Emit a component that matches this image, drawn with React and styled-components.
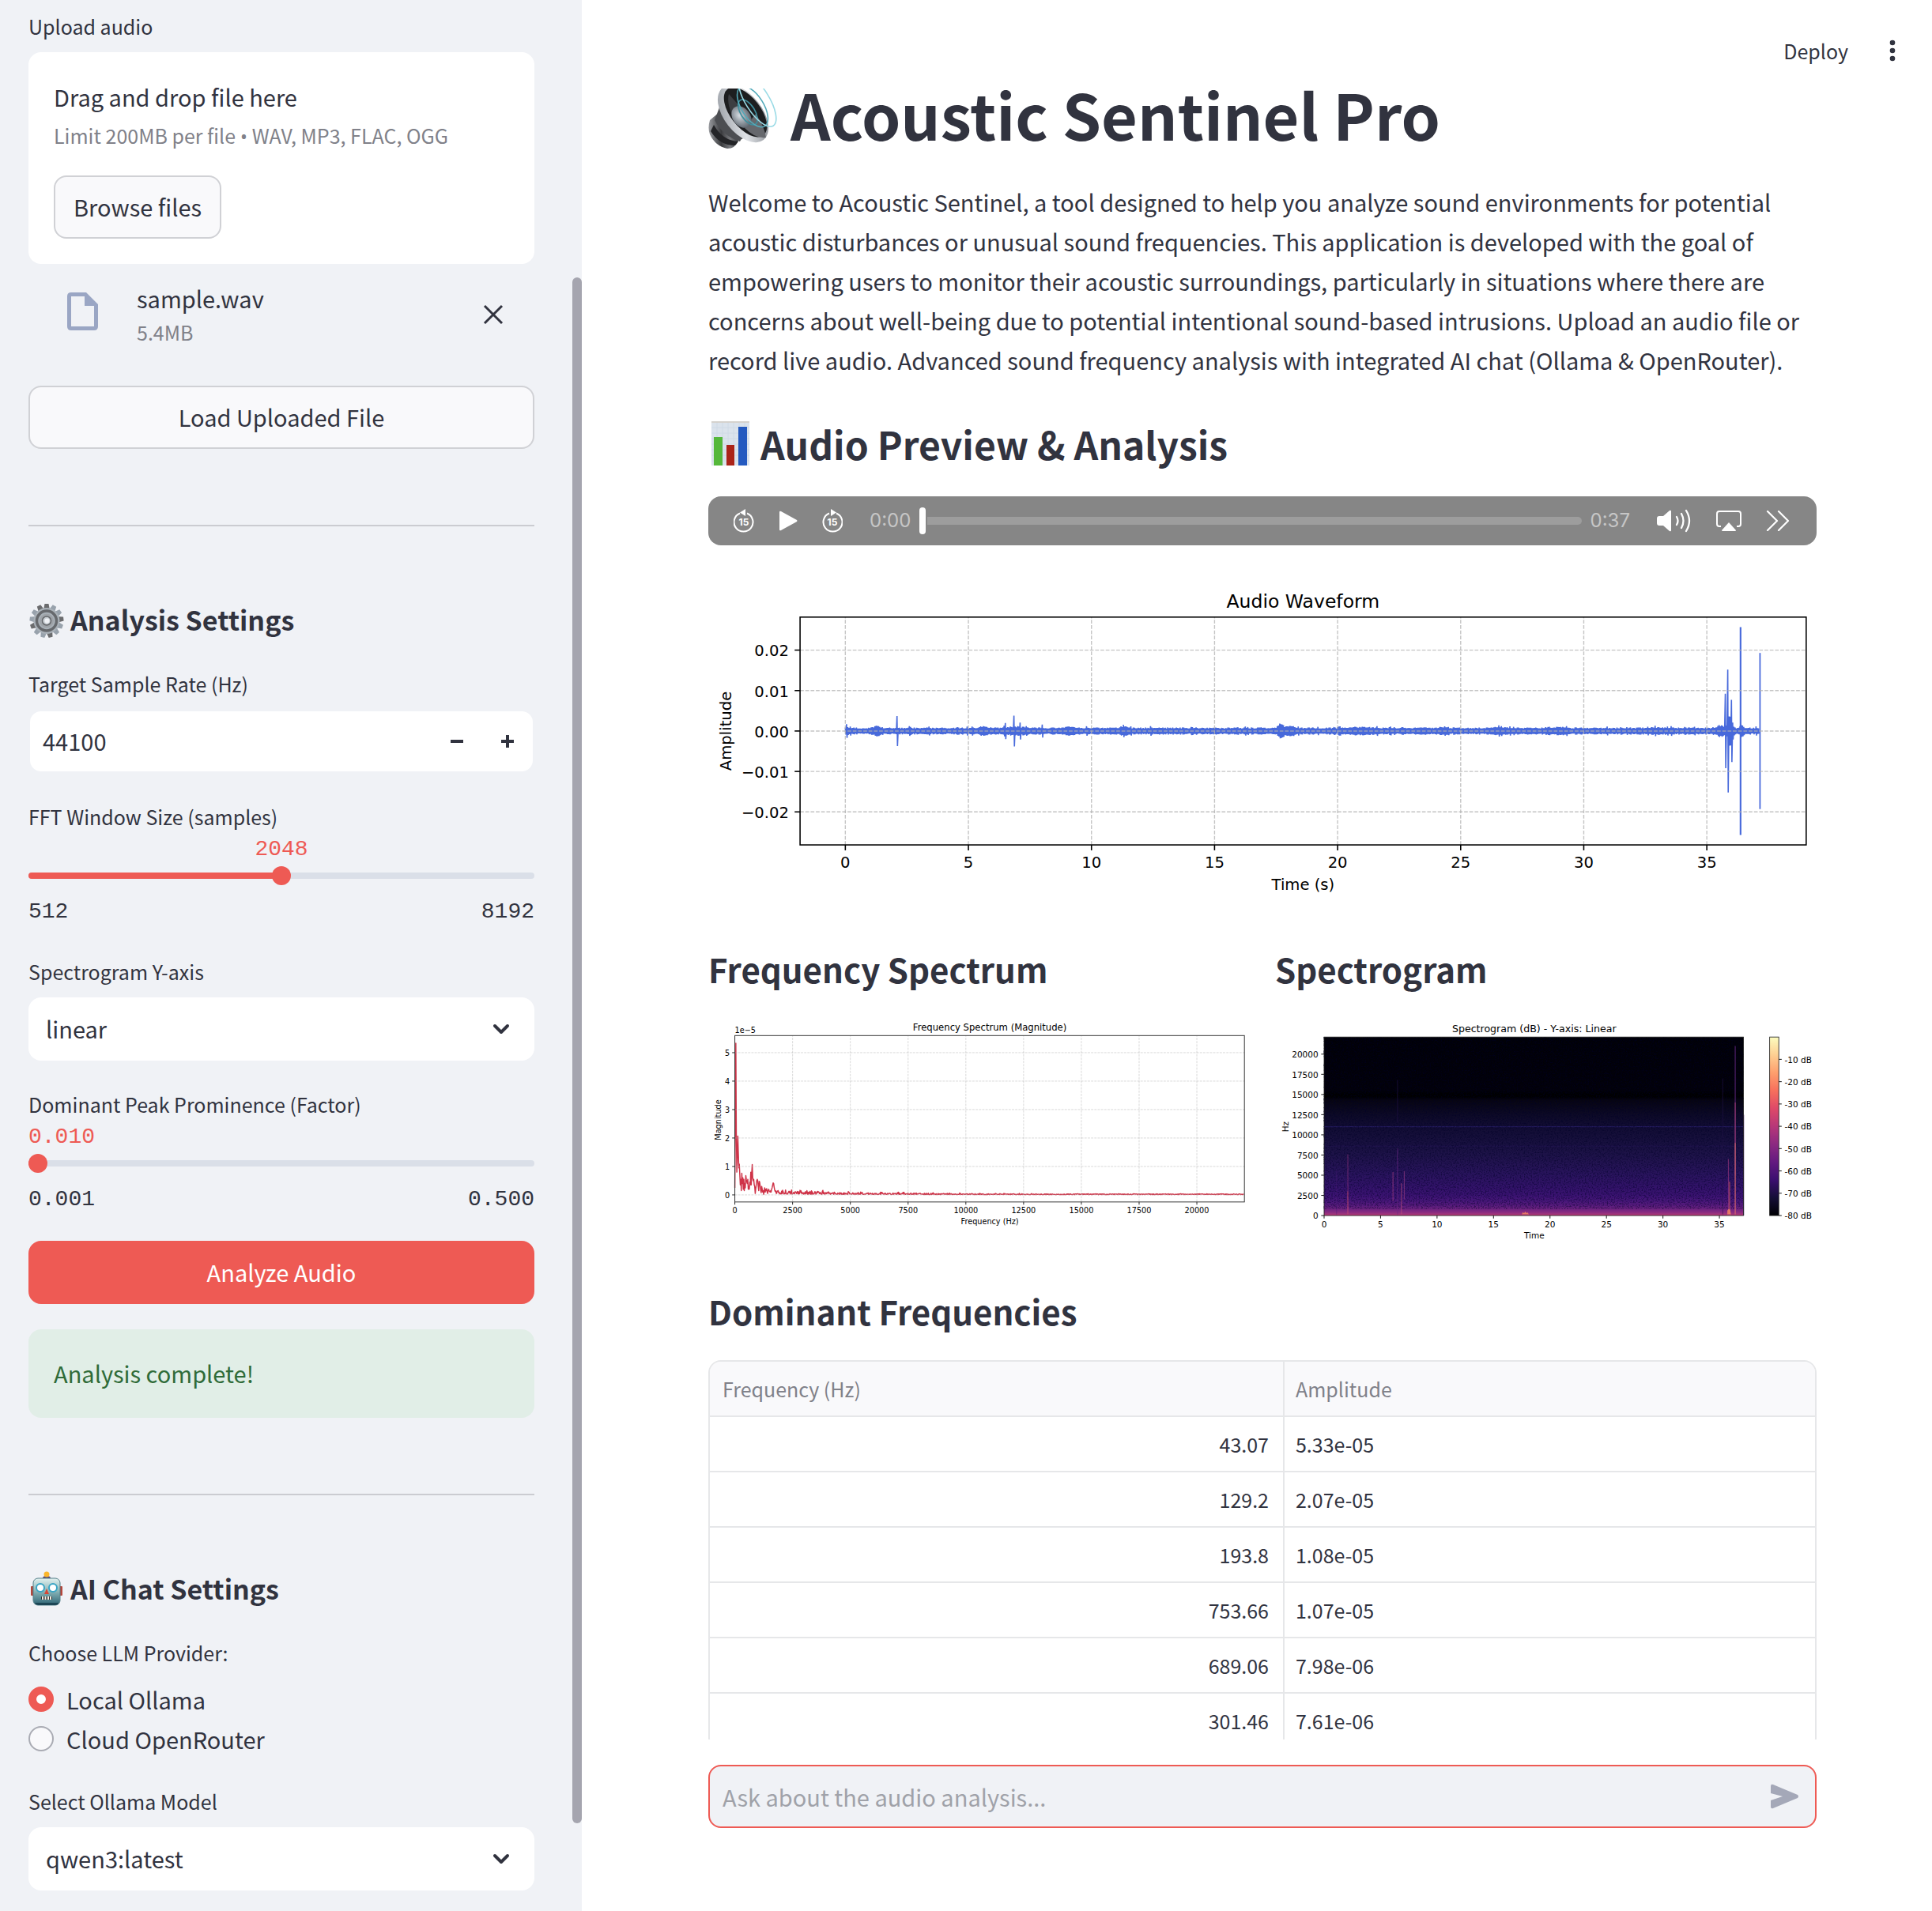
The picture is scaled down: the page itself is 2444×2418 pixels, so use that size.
import React, { useState } from "react";
import styled, { createGlobalStyle } from "styled-components";

const color = {
  ink: "#31333f",
  muted: "#808189",
  accent: "#ee5a54",
  side: "#f0f2f6",
  panel: "#f9f9fb",
  line: "#e6e7e9",
};
const sans = `"Noto Sans CJK SC", "Noto Sans", sans-serif`;
const mono = `"Liberation Mono", monospace`;

const Global = createGlobalStyle`
  *, *::before, *::after { box-sizing: border-box; }
  body { margin: 0; background: #fff; color: ${color.ink}; font: 400 29px/50px ${sans}; }
  button, input, select { font: inherit; color: inherit; margin: 0; }
  button { cursor: pointer; }
  h1, h2, h3, p { margin: 0; }
  svg { display: block; flex: none; }
`;

/* ---------- layout ---------- */

const Page = styled.div`
  display: grid;
  grid-template-columns: 736px minmax(0, 1fr);
  height: 100vh;
  overflow: hidden;
`;

const Sidebar = styled.aside`
  position: relative;
  display: flex;
  flex-direction: column;
  gap: 32px;
  min-height: 0;
  padding: 12px 60px 26px 36px;
  background: ${color.side};
  overflow: hidden;
  & > * { flex: none; }
`;

const ScrollThumb = styled.div`
  position: absolute;
  right: 0;
  top: 14.5%;
  width: 12px;
  height: 80.9%;
  border-radius: 6px;
  background: #a5a5af;
`;

const Main = styled.main`
  display: flex;
  flex-direction: column;
  min-width: 0;
  min-height: 0;
`;

const TopBar = styled.header`
  flex: none;
  display: flex;
  justify-content: flex-end;
  align-items: center;
  gap: 30px;
  height: 84px;
  padding: 43px 36px 0 0;
`;

const PlainButton = styled.button`
  display: flex;
  align-items: center;
  padding: 0;
  border: 0;
  background: none;
  font-size: 25px;
  line-height: 42px;
`;

const Content = styled.div`
  flex: 1;
  min-height: 0;
  display: flex;
  flex-direction: column;
  gap: 32px;
  padding: 16px 146px 0 160px;
  overflow: hidden;
  & > * { flex: none; }
`;

const Columns = styled.div`
  display: grid;
  grid-template-columns: repeat(2, minmax(0, 1fr));
  gap: 32px;
`;

const Column = styled.section`
  display: flex;
  flex-direction: column;
  gap: 32px;
`;

/* ---------- headings and text ---------- */

const PageTitle = styled.h1`
  display: flex;
  gap: 14px;
  padding-bottom: 10px;
  font-size: 79px;
  line-height: 88px;
  font-weight: 700;
`;

const SectionTitle = styled.h2`
  display: flex;
  align-items: center;
  gap: 10px;
  padding: 16px 0 2px;
  font-size: 48px;
  line-height: 66px;
  font-weight: 600;
`;

const SubTitle = styled.h3`
  padding: 13px 0 2px;
  font-size: 42px;
  line-height: 56px;
  font-weight: 600;
`;

const SideTitle = styled.h2`
  display: flex;
  align-items: center;
  gap: 7px;
  font-size: 34px;
  line-height: 52px;
  font-weight: 600;
`;

const Figure = styled.svg`
  width: 100%;
  height: auto;
  font-family: "DejaVu Sans", sans-serif;
  font-size: 10px;
`;

/* ---------- form parts ---------- */

const Group = styled.div`
  display: flex;
  flex-direction: column;
  gap: 34px;
`;

const Field = styled.div`
  display: flex;
  flex-direction: column;
`;

const Label = styled.label`
  font-size: 25px;
  line-height: 42px;
  margin-bottom: ${(p) => (p.$tight ? 0 : 12)}px;
`;

const DropZone = styled.div`
  display: flex;
  flex-direction: column;
  align-items: flex-start;
  padding: 32px;
  border-radius: 16px;
  background: #fff;
  line-height: 48px;
`;

const Caption = styled.span`
  font-size: 25px;
  line-height: ${(p) => p.$line || 50}px;
  color: ${color.muted};
`;

const Bullet = styled.span`
  font-family: "Open Sans", sans-serif;
  line-height: 0;
`;

const Button = styled.button`
  height: 80px;
  padding: 0 23px 3px;
  border: 2px solid ${(p) => (p.$primary ? color.accent : "#d0d1d5")};
  border-radius: 16px;
  background: ${(p) => (p.$primary ? color.accent : color.panel)};
  color: ${(p) => (p.$primary ? "#fff" : color.ink)};
  ${DropZone} > & { margin-top: 26px; }
`;

const FileRow = styled.div`
  display: flex;
  align-items: center;
  padding: 21px 39px 15px 48px;
`;

const FileText = styled.div`
  flex: 1;
  display: flex;
  flex-direction: column;
  padding-left: 47px;
  line-height: 44px;
`;

const Rule = styled.hr`
  width: 100%;
  height: 2px;
  margin: 64px 0 60px;
  border: 0;
  background: #cbccd1;
`;

const NumberBox = styled.div`
  display: flex;
  align-items: center;
  height: 80px;
  border: 2px solid ${color.side};
  border-radius: 16px;
  background: #fff;
`;

const NumberInput = styled.input`
  flex: 1;
  min-width: 0;
  padding: 0 16px 2px;
  border: 0;
  outline: 0;
  background: none;
`;

const StepButton = styled.button`
  display: grid;
  place-items: center;
  width: 64px;
  height: 76px;
  padding: 0;
  border: 0;
  background: none;
`;

const SelectWrap = styled.div`
  display: grid;
  align-items: center;
  & > * { grid-area: 1 / 1; }
  & > svg { justify-self: end; margin-right: 31px; pointer-events: none; }
`;

const Select = styled.select`
  appearance: none;
  width: 100%;
  height: 80px;
  padding: 0 64px 2px 22px;
  border: 0;
  border-radius: 16px;
  background: #fff;
`;

const SliderValue = styled.output`
  position: relative;
  display: block;
  width: max-content;
  font: 400 28px/42px ${mono};
  color: ${color.accent};
`;

const SliderBox = styled.div`
  position: relative;
  display: flex;
  align-items: center;
  height: 24px;
`;

const SliderTrack = styled.div`
  width: 100%;
  height: 8px;
  border-radius: 4px;
  background: #dadfe8;
  overflow: hidden;
`;

const SliderFill = styled.div`
  height: 100%;
  background: ${color.accent};
`;

const SliderThumb = styled.div`
  position: absolute;
  width: 24px;
  height: 24px;
  border-radius: 50%;
  background: ${color.accent};
`;

const SliderInput = styled.input`
  position: absolute;
  inset: 0;
  width: 100%;
  opacity: 0;
  cursor: pointer;
`;

const SliderEnds = styled.div`
  display: flex;
  justify-content: space-between;
  padding-top: 14px;
  font: 400 28px/40px ${mono};
`;

const Alert = styled.div`
  padding: 30px 32px 32px;
  border-radius: 16px;
  background: #e1eee7;
  color: #2f6b38;
`;

const RadioGroup = styled.fieldset`
  display: flex;
  flex-direction: column;
  gap: 2px;
  margin: 0;
  padding: 0;
  border: 0;
`;

const Legend = styled.legend`
  padding: 0;
  margin-bottom: 14px;
  font-size: 25px;
  line-height: 42px;
`;

const RadioLabel = styled.label`
  display: flex;
  align-items: center;
  gap: 16px;
  line-height: 48px;
`;

const Radio = styled.input`
  appearance: none;
  width: 32px;
  height: 32px;
  border: 2px solid #a9abb3;
  border-radius: 50%;
  background: ${color.panel};
  &:checked { border: 10px solid ${color.accent}; background: #fff; }
`;

/* ---------- audio player ---------- */

const Player = styled.div`
  display: flex;
  align-items: center;
  gap: 31px;
  height: 62px;
  padding: 0 34px 0 32px;
  border-radius: 16px;
  background: #868686;
  color: #fff;
`;

const Timeline = styled.div`
  flex: 1;
  display: flex;
  align-items: center;
  gap: 11px;
  padding: 0 3px;
  font: 400 24px/30px Inter, sans-serif;
  color: #c6c6c6;
`;

const Seek = styled.input`
  flex: 1;
  min-width: 0;
  appearance: none;
  height: 34px;
  background: none;
  &::-webkit-slider-runnable-track {
    height: 10px;
    border-radius: 5px;
    background: #9d9d9d;
  }
  &::-webkit-slider-thumb {
    appearance: none;
    width: 8px;
    height: 34px;
    margin-top: -12px;
    border-radius: 4px;
    background: #fff;
    box-shadow: 0 0 0 2px #868686;
  }
`;

/* ---------- data table ---------- */

const TableFrame = styled.div`
  border: 2px solid ${color.line};
  border-radius: 16px;
  overflow: hidden;
`;

const Table = styled.table`
  width: 100%;
  border-collapse: separate;
  border-spacing: 0;
  table-layout: fixed;
  font-size: 25px;
  line-height: 34px;
`;

const Cell = styled.td`
  height: 70px;
  padding: 0 18px 0 14px;
  border-bottom: 2px solid ${color.line};
  border-right: ${(p) => (p.$first ? 2 : 0)}px solid ${color.line};
  text-align: ${(p) => (p.$first ? "right" : "left")};
`;

const HeadCell = styled.th`
  width: ${(p) => (p.$first ? "52%" : "48%")};
  height: 70px;
  padding: 0 14px 0 ${(p) => (p.$first ? 16 : 14)}px;
  border-bottom: 2px solid ${color.line};
  border-right: ${(p) => (p.$first ? 2 : 0)}px solid ${color.line};
  background: ${color.panel};
  color: ${color.muted};
  font-weight: 400;
  text-align: left;
`;

/* ---------- chat bar ---------- */

const ChatBar = styled.form`
  flex: none;
  padding: 32px 146px 105px 160px;
`;

const ChatBox = styled.div`
  display: flex;
  align-items: center;
  height: 80px;
  padding: 0 20px 0 16px;
  border: 2px solid ${color.accent};
  border-radius: 16px;
  background: ${color.side};
`;

const ChatInput = styled.input`
  flex: 1;
  min-width: 0;
  padding: 0;
  border: 0;
  outline: 0;
  background: none;
  &::placeholder { color: #a0a2a9; opacity: 1; }
`;

/* ---------- drawings ---------- */

const Speaker = () => (
  <svg width="90" height="88" viewBox="0 0 90 88" aria-hidden="true">
    <defs>
      <linearGradient id="spRim" x1="0" y1="0" x2="1" y2="1">
        <stop offset="0" stopColor="#8b9098" />
        <stop offset=".5" stopColor="#dfe2e6" />
        <stop offset="1" stopColor="#6d7178" />
      </linearGradient>
      <linearGradient id="spBody" x1="0" y1="0" x2="1" y2="0">
        <stop offset="0" stopColor="#9a9ca0" />
        <stop offset=".35" stopColor="#3a3b3e" />
        <stop offset=".6" stopColor="#77797d" />
        <stop offset="1" stopColor="#17181a" />
      </linearGradient>
      <radialGradient id="spDome" cx=".45" cy=".4" r=".6">
        <stop offset="0" stopColor="#d5dce2" />
        <stop offset="1" stopColor="#5c646d" />
      </radialGradient>
      <clipPath id="spClip"><rect y="12" width="90" height="76" /></clipPath>
    </defs>
    <g clipPath="url(#spClip)">
      <path d="M2 52 Q-1 62 2 70 Q9 85 24 88 Q34 88 38 78 L46 74 L14 42 Z" fill="url(#spBody)" />
      <path d="M3 66 Q14 84 34 84 L38 79 Q18 78 7 58 Z" fill="#232427" />
      <path d="M8 52 L14 36 L44 72 L40 79 Q18 72 8 52 Z" fill="#4c4e52" />
      <ellipse cx="44" cy="44" rx="24" ry="42" transform="rotate(-38 44 44)" fill="url(#spRim)" />
      <ellipse cx="47" cy="42" rx="19" ry="37" transform="rotate(-38 47 42)" fill="#1d1e20" />
      <path d="M26 19 Q22 32 36 58 L48 44 Z" fill="#3c3e42" />
      <path d="M46 62 Q60 76 73 74 Q71 60 60 44 Z" fill="#66686d" />
      <ellipse cx="42" cy="48" rx="11" ry="15" transform="rotate(-38 42 48)" fill="url(#spDome)" />
      <g fill="none" strokeWidth="1.6">
        <ellipse cx="50" cy="42" rx="9" ry="18" transform="rotate(-32 50 42)" stroke="#3f8f9e" />
        <ellipse cx="56" cy="35" rx="14" ry="29" transform="rotate(-32 56 35)" stroke="#53aaba" />
        <ellipse cx="62" cy="27" rx="15" ry="38" transform="rotate(-32 62 27)" stroke="#9adbe6" />
      </g>
    </g>
  </svg>
);

const BarChart = () => (
  <svg width="56" height="56" viewBox="0 0 56 56" aria-hidden="true">
    <rect x="4" width="48" height="56" fill="#dbe3ec" />
    <path d="M4 1H52M4 8H52M4 15H52M4 22H52M4 29H52M4 36H52M4 43H52M4 50H52M11 0V56M18 0V56M25 0V56M32 0V56M39 0V56M46 0V56" stroke="#cfdae6" />
    <rect x="4" width="48" height="2" fill="#d5d2ce" />
    <rect x="7" y="20" width="11" height="36" fill="#55b83b" />
    <rect x="23" y="30" width="10" height="26" fill="#ab2419" />
    <rect x="38" y="7" width="11" height="49" fill="#245ac0" />
  </svg>
);

const Gear = () => (
  <svg width="46" height="46" viewBox="0 0 46 46" aria-hidden="true">
    {Array.from({ length: 13 }, (_, i) => (
      <path key={i} d="M20.500 3 L25.500 3 L27 11 L19 11 Z" fill={i % 3 ? "#98a2ac" : "#6b6c6e"} transform={`rotate(${i * 27.7} 23 24.500)`} />
    ))}
    <circle cx="23" cy="24.500" r="16.500" fill="#a9b1b8" />
    <circle cx="23" cy="24.500" r="12.500" fill="none" stroke="#66696d" strokeWidth="3.500" />
    <circle cx="23" cy="24.500" r="9" fill="#9ea3a8" />
    <circle cx="23" cy="24.500" r="5.500" fill="#c9cfd4" stroke="#63666a" strokeWidth="1.500" />
    <circle cx="23.500" cy="24.500" r="3" fill="#f0f2f6" />
  </svg>
);

const Robot = () => (
  <svg width="46" height="46" viewBox="0 0 46 46" aria-hidden="true">
    <defs>
      <linearGradient id="rbFace" x1="0" y1="0" x2="0" y2="1">
        <stop offset="0" stopColor="#e3f1f0" />
        <stop offset=".45" stopColor="#8fb9bb" />
        <stop offset="1" stopColor="#2b6374" />
      </linearGradient>
    </defs>
    <path d="M18 10 Q18 7 23 7 Q28 7 28 10 Z" fill="#5b4470" />
    <circle cx="23" cy="5" r="3.500" fill="#fbb62c" />
    <rect x="3" y="20" width="4" height="12" rx="1" fill="#b4473c" />
    <rect x="39" y="20" width="4" height="12" rx="1" fill="#b4473c" />
    <rect x="6" y="10" width="34" height="34" rx="6" fill="url(#rbFace)" stroke="#55818a" />
    <path d="M8 41 Q9 44 14 44 H33 Q38 44 38 41 Z" fill="#1d4655" />
    <circle cx="15" cy="22" r="5" fill="#fff" stroke="#38a4c4" strokeWidth="2" />
    <circle cx="31" cy="22" r="5" fill="#fff" stroke="#38a4c4" strokeWidth="2" />
    <path d="M23 23 L26 30 H20 Z" fill="#d64736" />
    <rect x="16" y="33" width="14" height="4" rx="1" fill="#2b2b2e" />
    <path d="M18 33V37M21.500 33V37M25 33V37M28 33V37" stroke="#f2ecdf" strokeWidth="2" />
  </svg>
);

const FileIcon = () => (
  <svg width="42" height="56" viewBox="0 0 42 56" fill="#9aa6c4" aria-hidden="true">
    <path d="M6 0H25L40 15V43Q40 48 35 48H6Q1 48 1 43V5Q1 0 6 0ZM6 5V43H35V17H23V5Z" fillRule="evenodd" />
  </svg>
);

const CloseIcon = () => (
  <svg width="26" height="26" viewBox="0 0 26 26" stroke={color.ink} strokeWidth="3" fill="none">
    <path d="M2 2L24 24M24 2L2 24" />
  </svg>
);

const Chevron = () => (
  <svg width="22" height="14" viewBox="0 0 22 14" fill="none" stroke={color.ink} strokeWidth="4" strokeLinecap="round" strokeLinejoin="round">
    <path d="M3 3L11 11L19 3" />
  </svg>
);

const Dots = () => (
  <svg width="40" height="32" viewBox="0 0 40 32" fill={color.ink}>
    <circle cx="26" cy="6" r="3.300" />
    <circle cx="26" cy="16" r="3.300" />
    <circle cx="26" cy="26" r="3.300" />
  </svg>
);

const Skip = ({ forward }) => (
  <svg width="26" height="32" viewBox="0 0 26 32" fill="none" stroke="#fff" strokeWidth="2">
    <g transform={forward ? undefined : "matrix(-1 0 0 1 26 0)"}>
      <path d="M9 6.500A12 12 0 1 0 18 6.500" />
      <path d="M11 1L18 5.500L11 10Z" fill="#fff" stroke="none" />
    </g>
    <text x="13" y="22" textAnchor="middle" fill="#fff" stroke="none" fontFamily="Inter, sans-serif" fontSize="12" fontWeight="700">15</text>
  </svg>
);

const Play = () => (
  <svg width="24" height="26" viewBox="0 0 24 26"><path d="M1 2Q1 0 3 1L23 12Q24 13 23 14L3 25Q1 26 1 24Z" fill="#fff" /></svg>
);

const Volume = () => (
  <svg width="44" height="32" viewBox="0 0 44 32" fill="none" stroke="#fff" strokeWidth="2.300" strokeLinecap="round">
    <path d="M3 10H8L16 3Q18 2 18 4V28Q18 30 16 29L8 22H3Q0 22 0 19V13Q0 10 3 10Z" fill="#fff" stroke="none" />
    <path d="M25 11Q28 16 25 21M31 7Q36 16 31 25M37 3Q45 16 37 29" />
  </svg>
);

const AirPlay = () => (
  <svg width="32" height="28" viewBox="0 0 32 28">
    <path d="M6 21H4Q1 21 1 18V5Q1 2 4 2H28Q31 2 31 5V18Q31 21 28 21H26" fill="none" stroke="#fff" strokeWidth="2" />
    <path d="M16 16L25 26Q25 27 24 27H8Q7 27 7 26Z" fill="#fff" />
  </svg>
);

const Chevrons = () => (
  <svg width="30" height="26" viewBox="0 0 30 26" fill="none" stroke="#fff" strokeWidth="2.200" strokeLinecap="round" strokeLinejoin="round">
    <path d="M2 1L14 13L2 25M16 1L28 13L16 25" />
  </svg>
);

const Send = () => (
  <svg width="36" height="32" viewBox="0 0 36 32" fill="#a4a8b8">
    <path d="M0 3Q0 0 3 1L34 14Q36 16 34 18L3 31Q0 32 0 29V21L15 16L0 12Z" />
  </svg>
);

/* ---------- charts ---------- */

function makeRandom(seed) {
  let s = seed;
  return () => {
    s = (s * 1664525 + 1013904223) % 4294967296;
    return s / 4294967296;
  };
}

const grid = { stroke: "#b0b0b0", strokeOpacity: 0.75, strokeWidth: 0.7, strokeDasharray: "2.4 1" };
const fineGrid = { stroke: "#b0b0b0", strokeOpacity: 0.6, strokeWidth: 0.8, strokeDasharray: "3 1.3" };

function waveformPath() {
  const rnd = makeRandom(7);
  const bumps = [
    [0.05, 0.0013, 0.04], [1.3, 0.0006, 0.15], [5.6, 0.0004, 0.2], [6.9, 0.0004, 0.5], [9.1, 0.0004, 0.25],
    [11.3, 0.0005, 0.15], [17.7, 0.0012, 0.15], [18.1, 0.0007, 0.18], [21, 0.0003, 0.5], [24.3, 0.0004, 0.15],
    [26.6, 0.0004, 0.2], [28.8, 0.0002, 0.5], [33, 0.0002, 0.5], [35.6, 0.0007, 0.25], [35.95, 0.004, 0.1], [36.4, 0.001, 0.06],
  ];
  const spikes = { 2.1: 0.0037, 2.6: 0.0012, 3.4: 0.0011, 6.5: 0.002, 6.85: 0.0038, 7.1: 0.0021, 8: 0.0016, 35.75: 0.0092, 35.85: 0.0152, 36: 0.0077 };
  let d = "";
  for (let i = 0; i <= 742; i += 1) {
    const t = i * 0.05;
    let a = 0.00058 + rnd() * 0.0003 + (rnd() > 0.93 ? 0.0003 : 0);
    bumps.forEach(([c, h, w]) => { a += h * Math.exp(-(((t - c) / w) ** 2)) * (0.6 + 0.4 * rnd()); });
    const k = Number(t.toFixed(2));
    if (spikes[k]) a = spikes[k];
    const x = 88.4 + t * 15.88;
    d += `${i ? "L" : "M"}${x.toFixed(2)} ${(103.5 - a * 2610).toFixed(2)}L${(x + 0.3).toFixed(2)} ${(103.5 + a * 2610).toFixed(2)}`;
  }
  return d;
}

const Waveform = () => {
  const xs = [0, 5, 10, 15, 20, 25, 30, 35];
  const ys = [0.02, 0.01, 0, -0.01, -0.02];
  const x = (t) => 88.4 + t * 15.88;
  const y = (v) => 103.5 - v * 2610;
  return (
    <Figure viewBox="0 0 715 220" role="img" aria-label="Audio Waveform">
      <path d={waveformPath()} fill="none" stroke="#4769db" strokeWidth=".8" />
      <path d={`M${x(36.37)} ${y(0.0257)}V${y(-0.0257)}`} stroke="#4769db" strokeWidth="1.1" />
      <path d={`M${x(37.16)} ${y(0.0193)}V${y(-0.0193)}`} stroke="#4769db" strokeWidth=".9" />
      {xs.map((t) => <path key={t} d={`M${x(t)} 177V30`} {...grid} />)}
      {ys.map((v) => <path key={v} d={`M59.2 ${y(v)}H708.300`} {...grid} />)}
      <rect x="59.200" y="30" width="649.100" height="147" fill="none" stroke="#000" strokeWidth=".8" />
      {xs.map((t) => (
        <g key={t}>
          <path d={`M${x(t)} 177v3.500`} stroke="#000" strokeWidth=".8" />
          <text x={x(t)} y="192" textAnchor="middle">{t}</text>
        </g>
      ))}
      {ys.map((v) => (
        <g key={v}>
          <path d={`M59.2 ${y(v)}h-3.500`} stroke="#000" strokeWidth=".8" />
          <text x="52" y={y(v) + 4} textAnchor="end">{v.toFixed(2).replace("-", "−")}</text>
        </g>
      ))}
      <text x="383.700" y="24" textAnchor="middle" fontSize="12">Audio Waveform</text>
      <text x="383.700" y="206" textAnchor="middle">Time (s)</text>
      <text textAnchor="middle" transform="translate(15 103.500) rotate(-90)">Amplitude</text>
    </Figure>
  );
};

function spectrumPath(x, y) {
  const rnd = makeRandom(21);
  const head = [0.25, 2.6, 5.33, 2.2, 0.8, 1.3, 2.07, 1.5, 0.95, 1.08, 0.7, 0.35, 0.55, 0.15, 0.76, 0.4, 0.6, 0.2, 0.55, 0.15, 0.4, 0.25, 0.68, 0.55, 0.45, 0.4, 0.55, 0.2, 0.3, 0.2, 0.45, 0.35, 0.8, 0.35, 0.75, 1.07, 0.6, 0.5, 0.55, 0.35, 0.3, 0.05, 0.2, 0.35, 0.5, 0.55, 0.5, 0.3, 0.15, 0.48, 0.45, 0.3, 0.15, 0.08, 0.3, 0.2, 0.1, 0.15, 0.02, 0.15, 0.25, 0.1, 0.2, 0.15, 0.22, 0.1, 0.05, 0.15, 0.2, 0.15, 0.12, 0.1, 0.15, 0.1, 0.2, 0.25, 0.34, 0.42, 0.4, 0.28, 0.18, 0.13, 0.15];
  let d = "";
  for (let i = 0; i < 1024; i += 1) {
    const f = i * 21.53;
    let v;
    if (f >= 14500) v = 0.008 + rnd() * 0.03;
    else v = 0.01 + 0.04 * Math.exp(-f / 3000) + rnd() * rnd() * (0.18 * Math.exp(-f / 3500) + 0.11 * (1 - f / 19000));
    if (i < head.length) v = head[i];
    d += `${i ? "L" : "M"}${x(f).toFixed(1)} ${y(v).toFixed(2)}`;
  }
  return d;
}

const Spectrum = () => {
  const x = (f) => 34.6 + (f / 2500) * 75.3;
  const y = (v) => 230.8 - v * 37.1;
  const xs = [0, 2500, 5000, 7500, 10000, 12500, 15000, 17500, 20000];
  const ys = [0, 1, 2, 3, 4, 5];
  return (
    <Figure viewBox="0 0 706 307" role="img" aria-label="Frequency Spectrum (Magnitude)">
      <path d={spectrumPath(x, y)} fill="none" stroke="#cf3348" strokeWidth="1.500" strokeLinejoin="round" />
      {xs.map((f) => <path key={f} d={`M${x(f)} 239.500V23`} {...fineGrid} />)}
      {ys.map((v) => <path key={v} d={`M34.600 ${y(v)}H699`} {...fineGrid} />)}
      <rect x="34.600" y="23" width="664.400" height="217" fill="none" stroke="#333" />
      {xs.map((f) => (
        <g key={f}>
          <path d={`M${x(f)} 240v3.500`} stroke="#222" />
          <text x={x(f)} y="255" textAnchor="middle">{f}</text>
        </g>
      ))}
      {ys.map((v) => (
        <g key={v}>
          <path d={`M34.600 ${y(v)}h-3.500`} stroke="#222" />
          <text x="28" y={y(v) + 4} textAnchor="end">{v}</text>
        </g>
      ))}
      <text x="34.600" y="20">1e−5</text>
      <text x="367" y="17" textAnchor="middle" fontSize="12">Frequency Spectrum (Magnitude)</text>
      <text x="367" y="269" textAnchor="middle">Frequency (Hz)</text>
      <text textAnchor="middle" transform="translate(16 133) rotate(-90)">Magnitude</text>
    </Figure>
  );
};

const magma = ["#fcfdbf", "#fecf92", "#fe9f6d", "#f7705c", "#de4968", "#b73779", "#8c2981", "#641a80", "#3b0f70", "#150e37", "#000004"];

const Spectrogram = () => {
  const L = 59;
  const T = 23;
  const W = 505;
  const H = 215;
  const x = (t) => L + (t / 5) * 68;
  const y = (f) => T + H - (f / 2500) * 24.3;
  const stops = [
    [14300, "#070511"], [12500, "#0d0a26"], [11100, "#120d33"],
    [10000, "#150f39"], [7500, "#1e1349"], [5000, "#2a145e"], [3500, "#33136a"], [2500, "#3b1372"], [1800, "#48177a"],
    [1200, "#5a1c7e"], [800, "#6e2381"], [450, "#852a80"], [200, "#9f327d"], [0, "#c8456c"],
  ];
  const streaks = [
    [1.1, 0, 5600, "#4c1d78", 0.4], [2.1, 0, 7600, "#a23a80", 0.5], [2.1, 0, 3000, "#d8566a", 0.5], [6.1, 1800, 5400, "#b0448a", 0.6],
    [6.5, 0, 8300, "#6c2a86", 0.6], [6.5, 11500, 16800, "#1f1145", 0.6], [6.85, 0, 4000, "#c25578", 0.6], [7.1, 2000, 5500, "#9a3c84", 0.6],
    [35.3, 0, 17000, "#24134a", 0.5], [35.8, 0, 7000, "#a63c80", 0.6], [35.9, 0, 4200, "#e0665c", 0.7],
    [36.4, 5000, 21000, "#5c2378", 0.9], [36.4, 0, 14000, "#b54476", 0.7], [36.4, 0, 9000, "#ee7f6a", 0.6], [37.15, 0, 12500, "#51207c", 0.7],
  ];
  return (
    <Figure viewBox="0 0 652 283" role="img" aria-label="Spectrogram (dB)">
      <defs>
        <linearGradient id="sgLow" x1="0" y1="0" x2="0" y2="1">
          <stop offset="0" stopColor="#010107" />
          <stop offset=".3" stopColor="#020109" />
          <stop offset=".32" stopColor="#000001" />
          <stop offset=".335" stopColor="#000001" />
          {stops.map(([f, c]) => <stop key={f} offset={1 - f / 22120} stopColor={c} />)}
        </linearGradient>
        <linearGradient id="sgScale" x1="0" y1="0" x2="0" y2="1">
          {magma.map((c, i) => <stop key={c} offset={i / 10} stopColor={c} />)}
        </linearGradient>
        <filter id="sgNoise" x="0" y="0" width="1" height="1">
          <feTurbulence type="fractalNoise" baseFrequency=".6" numOctaves="2" seed="4" />
          <feColorMatrix values="0 0 0 0 0  0 0 0 0 0  0 0 0 0 .02  3 0 0 0 -1.300" />
        </filter>
      </defs>
      <rect x={L} y={T} width={W} height={H} fill="url(#sgLow)" />
      <path d={`M${L} ${y(11000)}h${W}`} stroke="#231a5c" strokeWidth="1.200" />
      <path d={`M${L} ${y(8600)}h${W}`} stroke="#221552" strokeWidth=".8" />
      <rect x={L} y={T} width={W} height={H - 8} filter="url(#sgNoise)" opacity=".5" />
      {streaks.map(([t, a, b, c, o], i) => (
        <path key={i} d={`M${x(t)} ${y(a)}V${y(b)}`} stroke={c} strokeOpacity={o} strokeWidth="1.100" />
      ))}
      <path d={`M${x(17.5)} ${y(80)}l1-3l2 1l1-2l2 2l1-1l2 3zM${x(35.7)} ${y(0)}v-6l1.500-2l2 1l1 7z`} fill="#f58860" fillOpacity=".8" />
      <path d={`M${L} ${T + H - 1}h${W}`} stroke="#a8327a" />
      <rect x={L} y={T} width={W} height={H} fill="none" stroke="#222" strokeWidth=".8" />
      {[0, 5, 10, 15, 20, 25, 30, 35].map((t) => (
        <g key={t}>
          <path d={`M${x(t)} ${T + H}v3.500`} stroke="#222" />
          <text x={x(t)} y="252" textAnchor="middle">{t}</text>
        </g>
      ))}
      {[0, 2500, 5000, 7500, 10000, 12500, 15000, 17500, 20000].map((f) => (
        <g key={f}>
          <path d={`M${L} ${y(f)}h-3.500`} stroke="#222" />
          <text x="52" y={y(f) + 4} textAnchor="end">{f}</text>
        </g>
      ))}
      <rect x="595.500" y={T} width="11" height={H} fill="url(#sgScale)" stroke="#222" strokeWidth=".8" />
      {[10, 20, 30, 40, 50, 60, 70, 80].map((v) => (
        <g key={v}>
          <path d={`M606.500 ${T + v * 2.6875}h3.500`} stroke="#222" />
          <text x="613.500" y={T + v * 2.6875 + 4}>{`-${v} dB`}</text>
        </g>
      ))}
      <text x="312" y="17" textAnchor="middle" fontSize="12">Spectrogram (dB) - Y-axis: Linear</text>
      <text x="312" y="266" textAnchor="middle">Time</text>
      <text textAnchor="middle" transform="translate(16 131) rotate(-90)">Hz</text>
    </Figure>
  );
};

/* ---------- composed parts ---------- */

function Slider({ id, label, min, max, step, value, onChange, percent, show, ends }) {
  const half = show.length / 2;
  return (
    <Field>
      <Label htmlFor={id} $tight>{label}</Label>
      <SliderValue htmlFor={id} style={{ left: `max(0px, calc(${percent}% - ${half}ch))` }}>{show}</SliderValue>
      <SliderBox>
        <SliderTrack><SliderFill style={{ width: `${percent}%` }} /></SliderTrack>
        <SliderThumb style={{ left: `clamp(0px, calc(${percent}% - 12px), calc(100% - 24px))` }} />
        <SliderInput id={id} type="range" min={min} max={max} step={step} value={value} onChange={(e) => onChange(Number(e.target.value))} />
      </SliderBox>
      <SliderEnds><span>{ends[0]}</span><span>{ends[1]}</span></SliderEnds>
    </Field>
  );
}

const windowSizes = [512, 1024, 2048, 4096, 8192];
const rows = [
  ["43.07", "5.33e-05"],
  ["129.2", "2.07e-05"],
  ["193.8", "1.08e-05"],
  ["753.66", "1.07e-05"],
  ["689.06", "7.98e-06"],
  ["301.46", "7.61e-06"],
];

export default function App() {
  const [rate, setRate] = useState(44100);
  const [fft, setFft] = useState(2);
  const [prominence, setProminence] = useState(0.01);
  const [provider, setProvider] = useState("Local Ollama");

  return (
    <>
      <Global />
      <Page>
        <Sidebar>
          <Field>
            <Label as="span">Upload audio</Label>
            <DropZone>
              <span>Drag and drop file here</span>
              <Caption>Limit 200MB per file <Bullet>•</Bullet> WAV, MP3, FLAC, OGG</Caption>
              <Button type="button">Browse files</Button>
            </DropZone>
            <FileRow>
              <FileIcon />
              <FileText>
                <span>sample.wav</span>
                <Caption $line={42}>5.4MB</Caption>
              </FileText>
              <PlainButton type="button" aria-label="Remove sample.wav"><CloseIcon /></PlainButton>
            </FileRow>
          </Field>
          <Button type="button">Load Uploaded File</Button>
          <Rule />
          <Group>
            <SideTitle><Gear />Analysis Settings</SideTitle>
            <Field>
              <Label htmlFor="rate">Target Sample Rate (Hz)</Label>
              <NumberBox>
                <NumberInput id="rate" inputMode="numeric" value={rate} onChange={(e) => setRate(Number(e.target.value) || 0)} />
                <StepButton type="button" aria-label="Decrease" onClick={() => setRate(rate - 1)}>
                  <svg width="16" height="16" viewBox="0 0 16 16"><path d="M0 8H16" stroke={color.ink} strokeWidth="4" /></svg>
                </StepButton>
                <StepButton type="button" aria-label="Increase" onClick={() => setRate(rate + 1)}>
                  <svg width="16" height="16" viewBox="0 0 16 16"><path d="M0 8H16M8 0V16" stroke={color.ink} strokeWidth="4" /></svg>
                </StepButton>
              </NumberBox>
            </Field>
            <Slider
              id="fft" label="FFT Window Size (samples)" min={0} max={4} step={1} value={fft} onChange={setFft}
              percent={fft * 25} show={String(windowSizes[fft])} ends={["512", "8192"]}
            />
            <Field>
              <Label htmlFor="yaxis">Spectrogram Y-axis</Label>
              <SelectWrap>
                <Select id="yaxis" defaultValue="linear"><option>linear</option><option>log</option></Select>
                <Chevron />
              </SelectWrap>
            </Field>
            <Slider
              id="prominence" label="Dominant Peak Prominence (Factor)" min={0.001} max={0.5} step={0.001} value={prominence}
              onChange={setProminence} percent={((prominence - 0.001) / 0.499) * 100} show={prominence.toFixed(3)} ends={["0.001", "0.500"]}
            />
          </Group>
          <Button type="button" $primary>Analyze Audio</Button>
          <Alert role="status">Analysis complete!</Alert>
          <Rule />
          <Group>
            <SideTitle><Robot />AI Chat Settings</SideTitle>
            <RadioGroup>
              <Legend>Choose LLM Provider:</Legend>
              {["Local Ollama", "Cloud OpenRouter"].map((name) => (
                <RadioLabel key={name}>
                  <Radio type="radio" name="provider" checked={provider === name} onChange={() => setProvider(name)} />
                  {name}
                </RadioLabel>
              ))}
            </RadioGroup>
            <Field>
              <Label htmlFor="model">Select Ollama Model</Label>
              <SelectWrap>
                <Select id="model" defaultValue="qwen3:latest"><option>qwen3:latest</option></Select>
                <Chevron />
              </SelectWrap>
            </Field>
          </Group>
          <ScrollThumb />
        </Sidebar>

        <Main>
          <TopBar>
            <PlainButton type="button">Deploy</PlainButton>
            <PlainButton type="button" aria-label="Main menu"><Dots /></PlainButton>
          </TopBar>
          <Content>
            <PageTitle><Speaker />Acoustic Sentinel Pro</PageTitle>
            <p>
              Welcome to Acoustic Sentinel, a tool designed to help you analyze sound environments for potential acoustic
              disturbances or unusual sound frequencies. This application is developed with the goal of empowering users to
              monitor their acoustic surroundings, particularly in situations where there are concerns about well-being due
              to potential intentional sound-based intrusions. Upload an audio file or record live audio. Advanced sound
              frequency analysis with integrated AI chat (Ollama &amp; OpenRouter).
            </p>
            <SectionTitle><BarChart />Audio Preview &amp; Analysis</SectionTitle>
            <Player>
              <PlainButton type="button" aria-label="Back 15 seconds"><Skip /></PlainButton>
              <PlainButton type="button" aria-label="Play"><Play /></PlainButton>
              <PlainButton type="button" aria-label="Forward 15 seconds"><Skip forward /></PlainButton>
              <Timeline>
                <span>0:00</span>
                <Seek type="range" min="0" max="37" defaultValue="0" aria-label="Position" />
                <span>0:37</span>
              </Timeline>
              <PlainButton type="button" aria-label="Volume"><Volume /></PlainButton>
              <PlainButton type="button" aria-label="AirPlay"><AirPlay /></PlainButton>
              <PlainButton type="button" aria-label="More controls"><Chevrons /></PlainButton>
            </Player>
            <Waveform />
            <Columns>
              <Column>
                <SubTitle>Frequency Spectrum</SubTitle>
                <Spectrum />
              </Column>
              <Column>
                <SubTitle>Spectrogram</SubTitle>
                <Spectrogram />
              </Column>
            </Columns>
            <SubTitle>Dominant Frequencies</SubTitle>
            <TableFrame>
              <Table>
                <thead>
                  <tr>
                    <HeadCell scope="col" $first>Frequency (Hz)</HeadCell>
                    <HeadCell scope="col">Amplitude</HeadCell>
                  </tr>
                </thead>
                <tbody>
                  {rows.map(([hz, amp]) => (
                    <tr key={hz}>
                      <Cell $first>{hz}</Cell>
                      <Cell>{amp}</Cell>
                    </tr>
                  ))}
                </tbody>
              </Table>
            </TableFrame>
          </Content>
          <ChatBar onSubmit={(e) => e.preventDefault()}>
            <ChatBox>
              <ChatInput aria-label="Ask about the audio analysis" placeholder="Ask about the audio analysis..." />
              <PlainButton type="submit" aria-label="Send"><Send /></PlainButton>
            </ChatBox>
          </ChatBar>
        </Main>
      </Page>
    </>
  );
}
